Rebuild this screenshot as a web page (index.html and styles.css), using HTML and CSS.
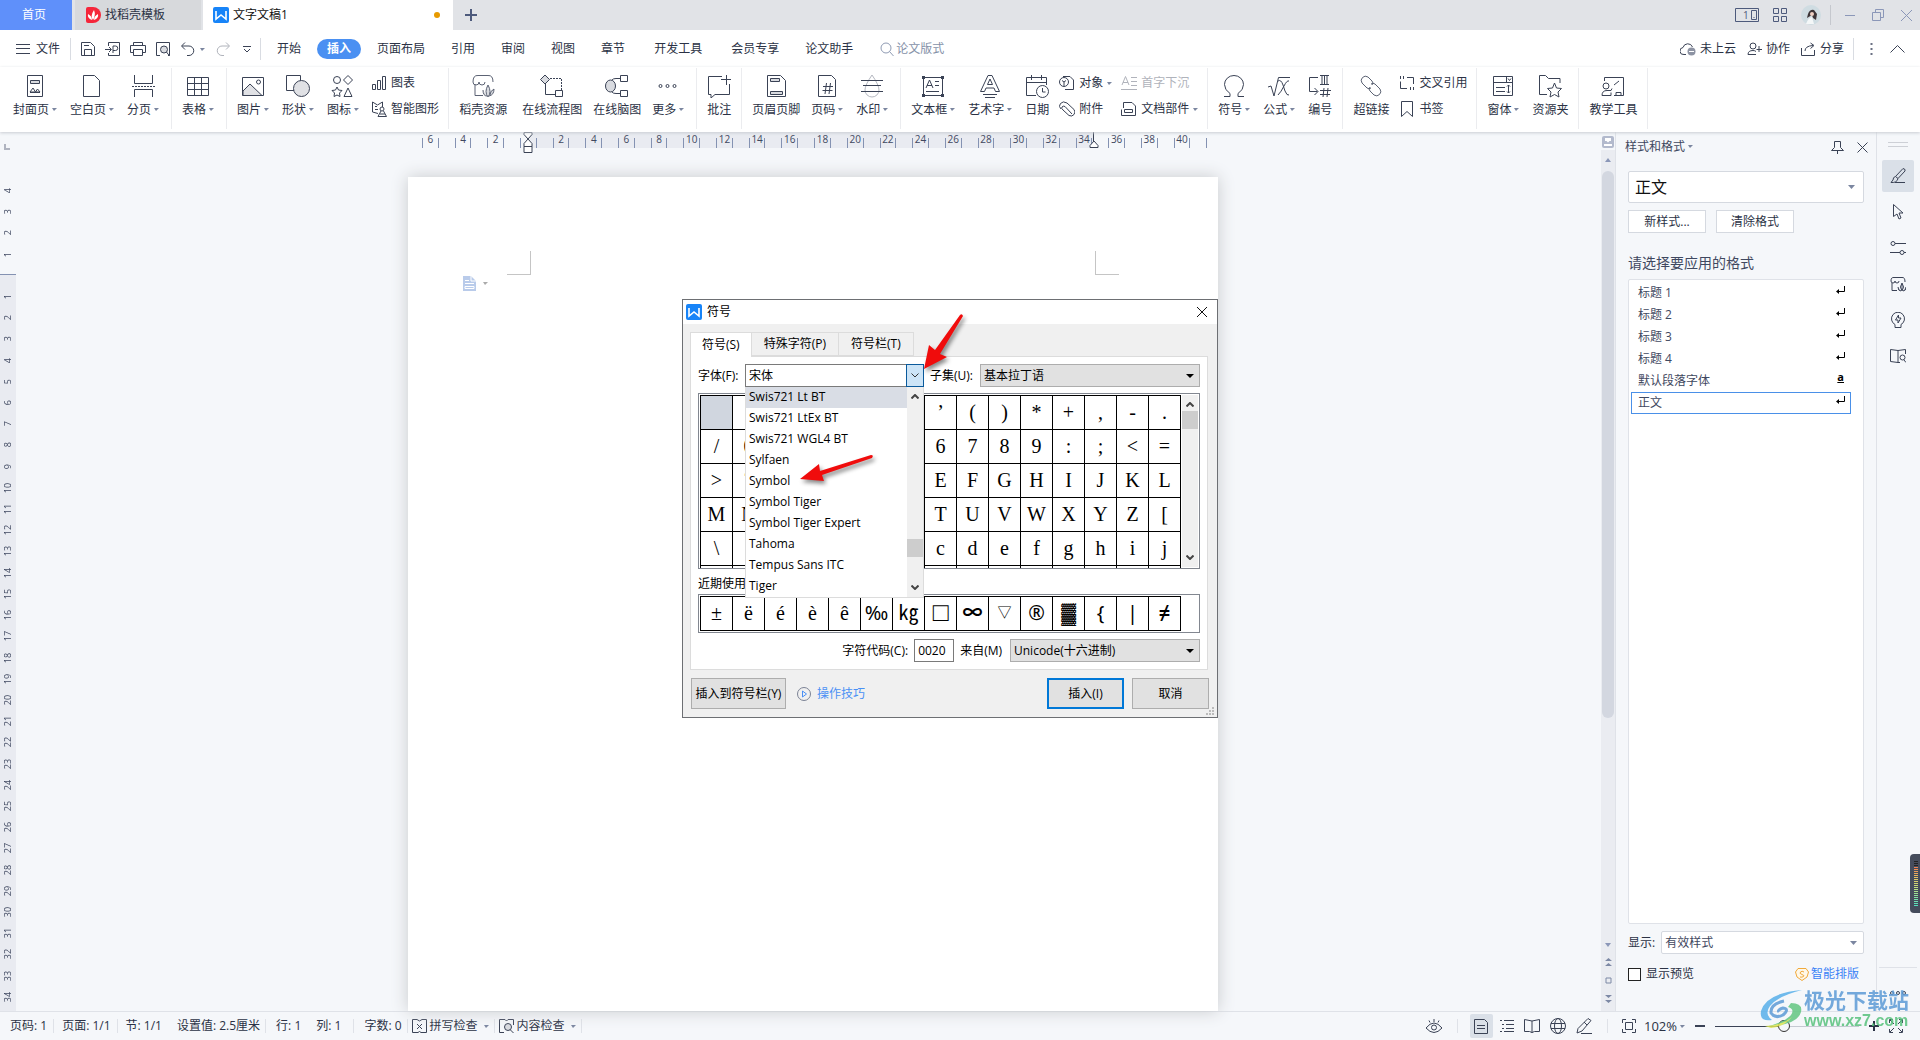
FILE: index.html
```html
<!DOCTYPE html>
<html lang="zh-CN">
<head>
<meta charset="utf-8">
<title>文字文稿1</title>
<link rel="stylesheet" href="styles.css">
</head>
<body>
<header class="tabbar">
  <button class="tab tab-home">首页</button>
  <button class="tab tab-docer"><svg class="logo" width="16" height="16" viewBox="0 0 16 16"><path d="M1 2q0-2 2-2h5a8 8 0 0 1 0 16H3q-2 0-2-2z" fill="#f5263a"/><path d="M8 13Q5 9 9 3q2 5-1 10M7 13Q2 11 3 7q4 2 4 6M9 13q0-4 4-6 1 4-4 6" fill="#fff"/></svg>找稻壳模板</button>
  <button class="tab tab-doc"><svg class="logo" width="16" height="16" viewBox="0 0 16 16"><rect width="16" height="16" rx="2" fill="#1784f8"/><path d="M3 4v8l5-4 5 4V4" fill="none" stroke="#fff" stroke-width="1.6"/></svg>文字文稿1<i class="dirty"></i></button>
  <button class="newtab" aria-label="新建"><svg width="12" height="12" viewBox="0 0 12 12"><path d="M6 0v12M0 6h12" stroke="#4d5a7c" stroke-width="2"/></svg></button>
  <div class="winbtns">
    <svg class="wi" width="24" height="14" viewBox="0 0 24 14"><path d="M.5.5h23v13H.5zM16.500 2.500h5v9h-5zM18.500 9.500h1"/><text x="8" y="11" font-size="10" stroke="none" fill="#4d5a7c">1</text></svg>
    <svg class="wi" width="14" height="14" viewBox="0 0 14 14"><path d="M.5.5h5v5h-5zM8.500.5h5v5h-5zM.5 8.500h5v5h-5zM8.500 8.500h5v5h-5z"/></svg>
    <svg width="20" height="20" viewBox="0 0 20 20"><circle cx="10" cy="10" r="10" fill="#cfdce2"/><path d="M7 9q2-5 6-4l3 4-1 6-3-2-1-3-5 3z" fill="#3c3437"/><circle cx="11" cy="9" r="2" fill="#efd0c3"/><path d="M5 19q2-6 6-7l2 7z" fill="#f4f7f8"/></svg>
    <i class="wsep"></i>
    <svg class="wi pale" width="10" height="14" viewBox="0 0 10 14"><path d="M0 7.500h10"/></svg>
    <svg class="wi pale restore" width="12" height="12" viewBox="0 0 12 12"><path d="M.5 3.500h8v8h-8zM3.500 3.500v-3h8v8h-3"/></svg>
    <svg class="wi pale" width="11" height="11" viewBox="0 0 11 11"><path d="M0 0l11 11M11 0L0 11"/></svg>
  </div>
</header>

<nav class="menubar">
  <button class="file"><svg class="ic" width="14" height="10" viewBox="0 0 14 10"><path d="M0 .5h14M0 4.500h14M0 9.500h14"/></svg>文件</button>
  <i class="msep"></i>
  <div class="quick">
    <svg class="ic" width="16" height="16" viewBox="0 0 16 16"><path d="M1.500 1.500h9l4 4v9h-13zM4.500 14.500v-6h7v6M4.500 1.500M4 4.500h5"/></svg>
    <svg class="ic" width="16" height="16" viewBox="0 0 16 16"><path d="M3.500 5V1.500h11v13h-11V12M0 8.500h6M4 6l2.500 2.500L4 11M8 12V5h2.500a2 2 0 0 1 0 4.500H8"/></svg>
    <svg class="ic" width="16" height="16" viewBox="0 0 16 16"><path d="M3.500 4.500v-3h9v3M3.500 11.500h-3v-7h15v7h-3M3.500 8.500h9v6h-9z"/></svg>
    <svg class="ic" width="16" height="16" viewBox="0 0 16 16"><path d="M5 14.500H1.500v-13h13v13H13"/><circle cx="9" cy="8.500" r="3.500" fill="#d9dbe0"/><path d="M11.500 11l3 4"/></svg>
    <svg class="ic undo" width="16" height="16" viewBox="0 0 16 16"><path d="M5 1.500L1.500 5 5 8.500M2 5h7a4.500 4.500 0 0 1 0 9.500H7"/></svg><i class="caret"></i>
    <svg class="ic faint redo" width="16" height="16" viewBox="0 0 16 16"><path d="M11 1.500L14.500 5 11 8.500M14 5H7a4.500 4.500 0 0 0 0 9.500h2"/></svg>
    <svg class="ic" width="8" height="8" viewBox="0 0 8 8"><path d="M0 1.500h8M1 4l3 3 3-3"/></svg>
  </div>
  <i class="msep"></i>
  <div class="menus">
    <button>开始</button><button class="on">插入</button><button>页面布局</button><button>引用</button><button>审阅</button><button>视图</button><button>章节</button><button class="wide">开发工具</button><button class="wide2">会员专享</button><button>论文助手</button>
  </div>
  <label class="search"><svg width="14" height="14" viewBox="0 0 14 14" fill="none" stroke="#8f9bb3"><circle cx="6" cy="6" r="5"/><path d="M9.500 9.500L13.500 14"/></svg><input type="text" placeholder="论文版式" aria-label="搜索"></label>
  <div class="share">
    <button><svg class="ic" width="16" height="14" viewBox="0 0 16 14"><path d="M6 12.500H4A3.500 3.500 0 0 1 3 5.500 5 5 0 0 1 12.500 5"/><circle cx="11.500" cy="9.500" r="4" fill="#8d93a3" stroke="none"/><path d="M9 9.500h5" stroke="#fff"/></svg>未上云</button>
    <button><svg class="ic" width="15" height="14" viewBox="0 0 15 14"><circle cx="6" cy="4" r="3"/><path d="M1 12.500q0-4 5-4 2 0 3 1M1 12.500h8M12 4v6M9.500 7.500H15"/></svg>协作</button>
    <button><svg class="ic" width="15" height="14" viewBox="0 0 15 14"><path d="M.5 6v7.500h13V8M4 9q0-5 8-5.500M9.500 1L13 3.500 9.500 6.500"/></svg>分享</button>
    <i class="msep"></i>
    <svg class="dots" width="3" height="13" viewBox="0 0 3 13"><path d="M.5 0h2v2h-2zM.5 5h2v2h-2zM.5 10h2v2h-2z" fill="#6b7183"/></svg>
    <svg class="ic" width="15" height="8" viewBox="0 0 15 8"><path d="M.5 7.500l7-7 7 7"/></svg>
  </div>
</nav>

<section class="ribbon">
  <button class="rb"><svg class="ic" viewBox="0 0 24 24"><path d="M4.500 1.500h15v21h-15z"/><path d="M7.500 6.500h9v3h-9z" fill="#d9dbe0"/><path d="M7 18l3-4 2.500 4 2-3 2.500 3zM7 18.500h10"/></svg><span>封面页<i class="caret"></i></span></button>
  <button class="rb"><svg class="ic" viewBox="0 0 24 24"><path d="M3.500 1.500h11l5 5v16h-16z"/></svg><span>空白页<i class="caret"></i></span></button>
  <button class="rb"><svg class="ic" viewBox="0 0 24 24"><path d="M3.500 1v8.500h18V1M3.500 23v-7.500h18V23"/><path d="M1 12.500h23" stroke-dasharray="2 1"/></svg><span>分页<i class="caret"></i></span></button>
  <i class="rsep"></i>
  <button class="rb"><svg class="ic" viewBox="0 0 24 24"><path d="M1.500 3.500h21v18h-21zM1.500 9.500h21M1.500 15.500h21M8.500 3.500v18M15.500 3.500v18"/></svg><span>表格<i class="caret"></i></span></button>
  <i class="rsep"></i>
  <button class="rb"><svg class="ic" viewBox="0 0 24 24"><path d="M1.500 3.500h21v18h-21z"/><path d="M2 17l7-7 12 11.500H2z" fill="#e0e1e5"/><circle cx="17.500" cy="8" r="2"/></svg><span>图片<i class="caret"></i></span></button>
  <button class="rb"><svg class="ic" viewBox="0 0 24 24"><path d="M.5 1.500h14v15H.5z"/><circle cx="15.500" cy="14.500" r="8" fill="#e0e1e5"/></svg><span>形状<i class="caret"></i></span></button>
  <button class="rb"><svg class="ic" viewBox="0 0 24 24"><circle cx="6" cy="6" r="3.500"/><path d="M17 1.500L21.500 6 17 10.500 12.500 6zM6 13l1.500 3 3.500.5-2.500 2.500.5 3.500-3-1.500L3 22.500l.5-3.500L1 16.500l3.500-.5zM17 14l4 8.500h-8z"/></svg><span>图标<i class="caret"></i></span></button>
  <div class="rcol">
    <button><svg class="ic" viewBox="0 0 16 16"><path d="M1.500 9.500h3v5h-3zM6.500 5.500h3v9h-3zM11.500 1.500h3v13h-3z"/></svg>图表</button>
    <button><svg class="ic" viewBox="0 0 16 16"><path d="M7 12.500L1.500 11V1l5 3 5-3v5M4 5.500h2M4 8.500h3"/><circle cx="11" cy="8" r="2"/><path d="M10 10l-3 5.500h8.500l-3-5.500M9 13h5"/></svg>智能图形</button>
  </div>
  <i class="rsep"></i>
  <button class="rb far"><svg class="ic soft" viewBox="0 0 24 24"><path d="M4 10v11.500h8M2 8q0-7 5-6.500h10q5-.5 5 6.500M2 8q0 3 3 3t3-3q0 3 3 3t3-3"/><path d="M17 23q-4-5 0-12 4 7 0 12M16 22q-4 0-4-6M18 22q5-1 5-7-4 2-4 6" fill="#d9dbe0"/></svg><span>稻壳资源</span></button>
  <button class="rb"><svg class="ic" viewBox="0 0 24 24"><path d="M5 1l4.500 4.500L5 10 .5 5.500z" fill="#d9dbe0"/><path d="M5.500 10v10.500H15M15.500 16.500h7v6h-7z"/><path d="M10 4.500h11.500V16" stroke-dasharray="2 1"/></svg><span>在线流程图</span></button>
  <button class="rb"><svg class="ic" viewBox="0 0 24 24"><ellipse cx="5.500" cy="12" rx="5" ry="6" fill="#d9dbe0"/><path d="M15.500 1.500h7v6h-7zM15.500 16.500h7v6h-7zM7 6q1-1.500 4-1.500h4M7 18q1 1.500 4 1.500h4"/></svg><span>在线脑图</span></button>
  <button class="rb"><svg class="ic" viewBox="0 0 24 24"><circle cx="4.500" cy="12" r="1.500"/><circle cx="11.500" cy="12" r="1.500"/><circle cx="18.500" cy="12" r="1.500"/></svg><span>更多<i class="caret"></i></span></button>
  <i class="rsep"></i>
  <button class="rb"><svg class="ic" viewBox="0 0 24 24"><path d="M15 2.500H1.500v18H4V24l4-3.500h14.500V10M14 5.500h10M19.500 1v10"/></svg><span>批注</span></button>
  <i class="rsep"></i>
  <button class="rb"><svg class="ic" viewBox="0 0 24 24"><path d="M3.500 1.500h13l5 5v16h-18z"/><path d="M6.500 4.500h9v3h-9zM6.500 17.500h12v3h-12z" fill="#d9dbe0"/></svg><span>页眉页脚</span></button>
  <button class="rb"><svg class="ic" viewBox="0 0 24 24"><path d="M3.500 1.500h13l4 4v17h-17zM11.500 9L10 20M15.500 9L14 20M8 12.500h10M7.500 16.500h10"/></svg><span>页码<i class="caret"></i></span></button>
  <button class="rb"><svg class="ic" viewBox="0 0 24 24"><path d="M12 1q-7 10-7 15a7 7 0 0 0 14 0q0-5-7-15z" stroke="#b4b7c0"/><path d="M1 6.500h22M3 11.500h18M1 17.500h22"/></svg><span>水印<i class="caret"></i></span></button>
  <i class="rsep"></i>
  <button class="rb"><svg class="ic" viewBox="0 0 24 24"><path d="M2.500 3.500h19v18h-19zM5 14l3.500-8L12 14M6 11.500h5M14 7.500h4M14 11.500h4M5 17.500h13"/><path d="M1 2h3v3H1zM20 2h3v3h-3zM1 20h3v3H1zM20 20h3v3h-3z" fill="#3a4255" stroke="none"/></svg><span>文本框<i class="caret"></i></span></button>
  <button class="rb"><svg class="ic" viewBox="0 0 24 24"><path d="M2.500 17.500L10 1.500h4l7.500 16h-4L16 14H8l-1.500 3.500zM9.500 10.500h5L12 5zM5 20.500h14M7 23.500h10"/></svg><span>艺术字<i class="caret"></i></span></button>
  <button class="rb"><svg class="ic" viewBox="0 0 24 24"><path d="M11 21.500H1.500v-18h20V11M1.500 8.500h20M6.500 1v5M16.500 1v5"/><circle cx="17.500" cy="17.500" r="6"/><path d="M17.500 14v4h3"/></svg><span>日期</span></button>
  <div class="rcol">
    <button><svg class="ic" viewBox="0 0 16 16"><path d="M4 1.500h7l3.500 3.500v9.500H6"/><circle cx="5" cy="7" r="4.500"/><path d="M3 5.500l2 1.500 2-1.500M5 7v4"/></svg>对象<i class="caret"></i></button>
    <button><svg class="ic" viewBox="0 0 16 16"><path d="M13 13L6 5.500q-2-1-3 .5t1 3l6 5.500q3 1.500 5-1t0-5L8 2Q4-.5 1.500 2.500T2 8"/></svg>附件</button>
  </div>
  <div class="rcol">
    <button class="off"><svg class="ic faint" viewBox="0 0 16 16"><path d="M1 10L4.500 1.500 8 10M2 7.500h5M10 2.500h6M10 6.500h6M10 10.500h6M0 14.500h16"/></svg>首字下沉</button>
    <button><svg class="ic" viewBox="0 0 16 16"><path d="M2.500 7V1.500H11L14.500 5v9.500h-12M.5 8.500v6h3M3.500 8.500h8v3h-8z"/></svg>文档部件<i class="caret"></i></button>
  </div>
  <i class="rsep"></i>
  <button class="rb"><svg class="ic" viewBox="0 0 24 24"><path d="M2 22.500h6v-3Q2.500 16 2.500 10.500a9.500 9 0 0 1 19 0q0 5.500-5.500 9v3h6"/></svg><span>符号<i class="caret"></i></span></button>
  <button class="rb"><svg class="ic" viewBox="0 0 24 24"><path d="M1 13l3-1 3 10L11.500 3.500H23M11 7q3-2 5 4l2 6q2 5 4 4M22 7q-2-1-5 5t-6 9"/></svg><span>公式<i class="caret"></i></span></button>
  <button class="rb"><svg class="ic" viewBox="0 0 24 24"><path d="M10 3.500H1.500v14h8M6.500 14l3.500 3.500L6.500 21M12 1.500h9M12 10.500h9M14 1.500v9M16.500 1.500v9M19 1.500v9M16 14l-1 9M20 14l-1 9M12 16.500h11M12 20.500h10"/></svg><span>编号</span></button>
  <i class="rsep"></i>
  <button class="rb"><svg class="ic soft" viewBox="0 0 24 24"><path d="M13 11q2-2 0-4L9 3Q6 1 3.500 3.500T3 9l5 5q2 1.500 4 0M11 13q-2 2 0 4l4 4q3 2 5.500-.5T21 15l-5-5q-2-1.500-4 0"/></svg><span>超链接</span></button>
  <div class="rcol">
    <button><svg class="ic" viewBox="0 0 16 16"><path d="M1.500 6.500v7H8M8 2.500h6.500V9M1.500 1v3M4.500 1v3M11.500 12v3M14.500 12v3"/></svg>交叉引用</button>
    <button><svg class="ic" viewBox="0 0 16 16"><path d="M2.500.5h11v15L8 10.500l-5.500 5z"/></svg>书签</button>
  </div>
  <i class="rsep"></i>
  <button class="rb"><svg class="ic" viewBox="0 0 24 24"><path d="M2.500 2.500h19v19h-19zM2.500 8.500h19M15.500 2.500v6M17 4.500l1.500 2 1.500-2M5 13.500h9M5 17.500h9M17.500 11v8M16 12.500l1.500-1.500 1.500 1.500M16 17.500l1.500 1.500 1.500-1.500"/></svg><span>窗体<i class="caret"></i></span></button>
  <button class="rb"><svg class="ic" viewBox="0 0 24 24"><path d="M9 20.500H1.500v-19h6l3 3h11.500V9M16.500 9l2 5 5 .5-3.500 3.500 1 5-4.500-2.500L12 23l1-5-3.500-3.500 5-.5z"/></svg><span>资源夹</span></button>
  <i class="rsep"></i>
  <button class="rb"><svg class="ic" viewBox="0 0 24 24"><path d="M3.500 7V3.500h19v18H13M13 11l5-4M15 21.500v-3h5v3"/><circle cx="5" cy="12" r="3"/><path d="M1 21.500q0-5 5-5h4l1-2M1 21.500h9v-3"/></svg><span>教学工具</span></button>
  <i class="rsep"></i>
</section>

<main class="work">
  <div class="vruler">
    <i class="tabstop"></i>
    <div class="vscale">
      <span>4</span><span>3</span><span>2</span><span>1</span><span class="zero"></span><span>1</span><span>2</span><span>3</span><span>4</span><span>5</span><span>6</span><span>7</span><span>8</span><span>9</span><span>10</span><span>11</span><span>12</span><span>13</span><span>14</span><span>15</span><span>16</span><span>17</span><span>18</span><span>19</span><span>20</span><span>21</span><span>22</span><span>23</span><span>24</span><span>25</span><span>26</span><span>27</span><span>28</span><span>29</span><span>30</span><span>31</span><span>32</span><span>33</span><span>34</span>
    </div>
  </div>
  <div class="canvas">
    <div class="hruler">
      <div class="hscale">
        <span>6</span><span>4</span><span>2</span><span class="origin"><svg width="10" height="22" viewBox="0 0 10 22"><path d="M1 .5h8v2L5 7 1 2.500zM5 7l4 4.500v3H1v-3zM1 14.500h8v6H1z" fill="#fff" stroke="#3a4255"/></svg></span><span>2</span><span>4</span><span>6</span><span>8</span><span>10</span><span>12</span><span>14</span><span>16</span><span>18</span><span>20</span><span>22</span><span>24</span><span>26</span><span>28</span><span>30</span><span>32</span><span class="edge">34<svg width="10" height="16" viewBox="0 0 10 16"><path d="M4.500 0v9M1 15.500v-2L5 9l4 4.500v2z" fill="#fff" stroke="#3a4255"/></svg></span><span>36</span><span>38</span><span>40</span><span class="last"></span>
      </div>
    </div>
    <div class="page">
      <i class="crop crop-l"></i><i class="crop crop-r"></i>
      <div class="smart"><svg width="13" height="15" viewBox="0 0 13 15"><path d="M0 0h8l5 5v10H0z" fill="#b9cbea"/><path d="M8 0v5h5M2 4.500h4M2 7.500h9M2 10.500h9v2H2z" fill="none" stroke="#fff"/></svg><i class="caret"></i></div>
    </div>
  </div>
  <div class="vscroll">
    <svg width="12" height="12" viewBox="0 0 12 12"><rect width="12" height="12" rx="2" fill="#b3bacd"/><path d="M3 2h6v3H7.500L6 6.500 4.500 5H3zM2 8h8v2H2z" fill="#fff"/></svg>
    <div class="track">
      <i class="up"></i><i class="thumb"></i>
      <i class="down"></i>
      <svg width="7" height="8" viewBox="0 0 7 8"><path d="M3.500 0L7 3H0zM3.500 5L7 8H0z" fill="#7d89a5"/></svg>
      <svg width="7" height="7" viewBox="0 0 7 7"><path d="M1 1h5v5H1z" fill="none" stroke="#7d89a5"/></svg>
      <svg width="7" height="8" viewBox="0 0 7 8"><path d="M0 0h7L3.500 3zM0 5h7L3.500 8z" fill="#7d89a5"/></svg>
    </div>
  </div>
  <aside class="panel">
    <div class="phead"><span>样式和格式<i class="caret"></i></span><svg class="ic" width="13" height="13" viewBox="0 0 13 13"><path d="M3.500.5h6v6l3 3H.5l3-3zM6.500 10v3"/></svg><svg class="ic" width="11" height="11" viewBox="0 0 11 11"><path d="M.5.5l10 10M10.500.5l-10 10"/></svg></div>
    <select class="cur" aria-label="当前样式"><option>正文</option></select>
    <div class="pbtns"><button>新样式...</button><button>清除格式</button></div>
    <h2>请选择要应用的格式</h2>
    <ul class="styles">
      <li>标题 1<svg class="ret" viewBox="0 0 10 8"><path d="M9.500 0v5.500H2"/><path d="M4 3v5L1 5.500z" fill="#000" stroke="none"/></svg></li>
      <li>标题 2<svg class="ret" viewBox="0 0 10 8"><path d="M9.500 0v5.500H2"/><path d="M4 3v5L1 5.500z" fill="#000" stroke="none"/></svg></li>
      <li>标题 3<svg class="ret" viewBox="0 0 10 8"><path d="M9.500 0v5.500H2"/><path d="M4 3v5L1 5.500z" fill="#000" stroke="none"/></svg></li>
      <li>标题 4<svg class="ret" viewBox="0 0 10 8"><path d="M9.500 0v5.500H2"/><path d="M4 3v5L1 5.500z" fill="#000" stroke="none"/></svg></li>
      <li>默认段落字体<b>a</b></li>
      <li class="sel">正文<svg class="ret" viewBox="0 0 10 8"><path d="M9.500 0v5.500H2"/><path d="M4 3v5L1 5.500z" fill="#000" stroke="none"/></svg></li>
    </ul>
    <div class="show"><label for="show">显示:</label><select id="show"><option>有效样式</option></select></div>
    <div class="prev"><label><input type="checkbox">显示预览</label><a href="#"><svg width="14" height="13" viewBox="0 0 14 13"><path d="M3 .5h8l2.500 3.500L12 9l-5 3.500L2 9 .5 4z" fill="#fff8e8" stroke="#f0a93b"/><path d="M9 4Q7 2.500 5.500 4T7 6.500t1.500 2T5 9" fill="none" stroke="#f0a93b"/></svg>智能排版</a></div>
  </aside>
  <aside class="strip">
    <i class="grip"></i>
    <button class="on" aria-label="样式"><svg class="ic" viewBox="0 0 16 16"><path d="M15 1.500L13 .5 5.500 8.500l2.500 2 7-7.500zM5.500 8.500Q3 9 3 12l-2 2.500q6 .5 7-4M5 14.500h10"/></svg></button>
    <button aria-label="选择"><svg class="ic" viewBox="0 0 16 16"><path d="M3.500.5v12L7 10l2 5 2-1-2-5h4z"/></svg></button>
    <button aria-label="属性"><svg class="ic" viewBox="0 0 16 16"><circle cx="3" cy="3.500" r="2"/><circle cx="12" cy="12.500" r="2"/><path d="M5 3.500h11M0 12.500h10M14 12.500h2"/></svg></button>
    <button aria-label="稻壳"><svg class="ic" viewBox="0 0 16 16"><path d="M2 7v7.500h5M1 5q0-4 3-3.500h8q3-.5 3 4.500M1 5q0 2 2 2t2-2q0 2 2 2t2-2"/><path d="M12 15q-3-4 0-8 3 4 0 8M11 15q-3 0-3-4M13 15q3 0 3-4" fill="#b0b4c0"/></svg></button>
    <button aria-label="灵感"><svg class="ic" viewBox="0 0 16 16"><path d="M5 12.500a6.500 6.500 0 1 1 6 0v3H5zM8.500 3L5.500 8H8v3l3-5H8.500z"/></svg></button>
    <button aria-label="查阅"><svg class="ic" viewBox="0 0 16 16"><path d="M8 2.500L.5 1.500v12L8 14.500zM8 2.500l7.500-1V6M8 14.500h2"/><circle cx="12.500" cy="9.500" r="2.500"/><path d="M14 12l2 2.500"/></svg></button>
    <div class="more"><svg class="ic" width="16" height="4" viewBox="0 0 16 4"><circle cx="2" cy="2" r="1.500"/><circle cx="8" cy="2" r="1.500"/><circle cx="14" cy="2" r="1.500"/></svg></div>
  </aside>
</main>

<footer class="status">
  <span>页码: 1</span><i></i><span>页面: 1/1</span><i></i><span>节: 1/1</span><span>设置值: 2.5厘米</span><i class="loose"></i><span>行: 1</span><span>列: 1</span><i class="gap"></i><span>字数: 0</span><i class="tight"></i>
  <button><svg class="ic" width="15" height="14" viewBox="0 0 15 14"><path d="M5 .5H.5v13H6l1.500-1 1.500 1h5.500V.5H10L7.500 2zM5 5l5 5M10 5l-5 5"/></svg>拼写检查<b class="caret"></b></button><i class="tight"></i>
  <button><svg class="ic" width="15" height="14" viewBox="0 0 15 14"><path d="M5 13.500H.5V.5H6L7.500 2 9 .5h5.500V6"/><circle cx="9" cy="8" r="3.500" fill="#d9dbe0"/><path d="M11 10.500l3.500 3.500"/></svg>内容检查<b class="caret"></b></button><i class="tight"></i>
  <div class="views">
    <svg class="ic" width="16" height="16" viewBox="0 0 16 16"><path d="M0 10q8-10 16 0-8 9-16 0zM8 1v3M3 2.500l1 2M13 2.500l-1 2"/><circle cx="8" cy="9.500" r="2.500"/></svg>
    <i></i>
    <button class="on" aria-label="页面视图"><svg class="ic" width="14" height="15" viewBox="0 0 14 15"><path d="M.5.5h10l3 3v11H.5zM3 6.500h8M3 9.500h8"/></svg></button>
    <svg class="ic" width="14" height="14" viewBox="0 0 14 14"><path d="M0 1.500h2M4 1.500h10M2 5.500h2M6 5.500h8M2 9.500h2M6 9.500h8M0 12.500h2M4 12.500h10"/></svg>
    <svg class="ic" width="16" height="14" viewBox="0 0 16 14"><path d="M8 2L.5.5v12h5L8 13.500l2.500-1h5V.5zM8 2v12"/></svg>
    <svg class="ic" width="16" height="16" viewBox="0 0 16 16"><circle cx="8" cy="8" r="7.500"/><ellipse cx="8" cy="8" rx="3.500" ry="7.500"/><path d="M1 5.500h14M1 10.500h14"/></svg>
    <svg class="ic" width="16" height="16" viewBox="0 0 16 16"><path d="M12 .5l3 2L6 13l-5 2 1-4.500zM8 4l3 3M5 15.500h11"/></svg>
    <i></i>
    <svg class="ic" width="14" height="14" viewBox="0 0 14 14"><path d="M.5 4V.5H4M10 .5h3.500V4M13.500 10v3.500H10M4 13.500H.5V10M3.500 3.500h7v7h-7z"/></svg>
    <span class="zoom">102%<b class="caret"></b></span>
    <svg width="10" height="2" viewBox="0 0 10 2"><path d="M0 0h10v2H0z" fill="#3a4255"/></svg>
    <input type="range" min="0" max="200" value="96" aria-label="显示比例">
    <svg width="10" height="10" viewBox="0 0 10 10"><path d="M5 0v10M0 5h10" stroke="#2b3245" stroke-width="2"/></svg>
    <svg class="ic" width="14" height="14" viewBox="0 0 14 14"><path d="M.5 4V.5H4M10 .5h3.500V4M13.500 10v3.500H10M4 13.500H.5V10M1 1l4 4M13 1L9 5M13 13L9 9M1 13l4-4"/></svg>
  </div>
</footer>

<section class="dialog" role="dialog" aria-label="符号">
  <div class="dtitle"><svg width="16" height="16" viewBox="0 0 16 16"><rect width="16" height="16" rx="2" fill="#1784f8"/><path d="M3 4v8l5-4 5 4V4" fill="none" stroke="#fff" stroke-width="1.600"/></svg><span>符号</span><svg width="10" height="10" viewBox="0 0 10 10"><path d="M0 0l10 10M10 0L0 10" stroke="#111"/></svg></div>
  <div class="dtabs"><button class="on">符号(S)</button><button>特殊字符(P)</button><button>符号栏(T)</button></div>
  <div class="pane">
    <div class="frow">
      <label for="font">字体(F):</label>
      <div class="combo"><input id="font" type="text" value="宋体"><button aria-label="展开"><svg width="8" height="5" viewBox="0 0 8 5"><path d="M.5.5L4 4 7.500.5" fill="none" stroke="#333"/></svg></button>
        <div class="drop">
          <ul><li class="hot">Swis721 Lt BT</li><li>Swis721 LtEx BT</li><li>Swis721 WGL4 BT</li><li>Sylfaen</li><li>Symbol</li><li>Symbol Tiger</li><li>Symbol Tiger Expert</li><li>Tahoma</li><li>Tempus Sans ITC</li><li>Tiger</li></ul>
          <div class="sb sb-list"><svg viewBox="0 0 8 5"><path d="M.5 4.500L4 1l3.500 3.500"/></svg><i></i><svg viewBox="0 0 8 5"><path d="M.5.5L4 4 7.500.5"/></svg></div>
        </div>
      </div>
      <label for="subset">子集(U):</label>
      <select id="subset" class="gsel"><option>基本拉丁语</option></select>
    </div>
    <div class="gbox gmain">
      <table class="glyphs">
        <tr><td class="pick"> <td><td><td><td><td><td><td>’<td>(<td>)<td>*<td>+<td>,<td>-<td>.
        <tr><td>/<td>0<td><td><td><td><td><td>6<td>7<td>8<td>9<td>:<td>;<td>&lt;<td>=
        <tr><td>&gt;<td>?<td><td><td><td><td><td>E<td>F<td>G<td>H<td>I<td>J<td>K<td>L
        <tr><td>M<td>N<td><td><td><td><td><td>T<td>U<td>V<td>W<td>X<td>Y<td>Z<td>[
        <tr><td>\<td>]<td><td><td><td><td><td>c<td>d<td>e<td>f<td>g<td>h<td>i<td>j
        <tr><td><td><td><td><td><td><td><td><td><td><td><td><td><td><td>
      </table>
      <div class="sb sb-grid"><svg viewBox="0 0 8 5"><path d="M.5 4.500L4 1l3.500 3.500"/></svg><i></i><svg viewBox="0 0 8 5"><path d="M.5.5L4 4 7.500.5"/></svg></div>
    </div>
    <div class="recent">近期使用</div>
    <div class="gbox">
      <table class="glyphs"><tr><td>±<td>ë<td>é<td>è<td>ê<td class="ui">‰<td class="ui">㎏<td class="big">□<td class="ui bold">∞<td class="small">▽<td class="ui">®<td>▓<td class="ui">{<td class="ui">|<td class="ui bold">≠</table>
    </div>
    <div class="code"><label for="code">字符代码(C):</label><input id="code" type="text" value="0020"><label for="from">来自(M)</label><select id="from" class="gsel"><option>Unicode(十六进制)</option></select></div>
  </div>
  <div class="dfoot"><button class="bar">插入到符号栏(Y)</button><a href="#"><svg width="14" height="14" viewBox="0 0 14 14" fill="none"><circle cx="7" cy="7" r="6.500" stroke="#7b8294"/><path d="M5.500 4l4 3-4 3z" stroke="#4a90f5"/></svg>操作技巧</a><button class="ok">插入(I)</button><button class="no">取消</button></div>
  <svg class="size" width="8" height="8" viewBox="0 0 8 8"><path d="M6 0h2v2H6zM3 3h2v2H3zM6 3h2v2H6zM0 6h2v2H0zM3 6h2v2H3zM6 6h2v2H6z" fill="#bbb"/></svg>
  <svg class="arrows" width="180" height="180" viewBox="0 0 180 180"><path d="M132 63l5-24 6 5L168 9q2-2 3 1l-23 38 7 3z"/><path d="M8 173l19-15 1 7 51-16q3 0 1 3l-50 17 2 6z"/></svg>
</section>

<div class="watermark"><svg width="44" height="40" viewBox="0 0 44 40"><path d="M42 1Q6 4 1 22q-2 11 11 9-8-6-2-14Q18 7 42 1z" fill="#58b0ea"/><path d="M31 14q12 0 10 9-3 13-36 15 20-5 26-12 4-6-3-8z" fill="#63c682"/><path d="M24 12q-14 3-13 12 4 6 12 2 7-6 0-7-6 2-4 4" fill="none" stroke="#5d9bd6" stroke-width="3"/><path d="M5 37q18-1 27-9-8 10-21 11z" fill="#dce352"/></svg><div><b>极光下载站</b><span>www.xz7.com</span></div></div>
<div class="meter"><i></i></div>
</body>
</html>
```
FILE: styles.css
```css
*{box-sizing:border-box}
body{margin:0;height:100vh;display:flex;flex-direction:column;overflow:hidden;background:#f5f7fa;font:12px/16px "Open Sans","Noto Sans CJK SC",sans-serif;color:#2b3245}
button{font:inherit;color:inherit;background:none;border:0;padding:0;white-space:nowrap}
input,select{font:inherit;color:inherit}
a{text-decoration:none;color:#3b82f6}
ul{list-style:none;margin:0;padding:0}
svg{flex:none;display:block}
.ic{fill:none;stroke:#3a4255}
.soft{stroke:#5c6374}
.faint{stroke:#b0b3bb}
.caret{display:inline-block;border:solid transparent;border-width:3px 3px 0 2px;border-top-color:#7b86a0;width:0;margin-left:3px;vertical-align:3px}

.tabbar{display:flex;height:30px;flex:none;background:#e1e3e7}
.tab{display:flex;align-items:center;height:30px}
.tab-home{width:72px;justify-content:center;padding-right:4px;background:#5f90fa;color:#fff}
.tab-docer{width:126px;margin-left:3px;padding-left:10px;gap:4px;background:#d7d9dc}
.tab-doc{width:250px;margin-left:2px;padding:0 13px 0 10px;gap:4px;background:#fff;color:#111}
.dirty{width:6px;height:6px;border-radius:3px;background:#e79a00;margin-left:auto}
.newtab{margin-left:12px}
.winbtns{margin-left:auto;display:flex;align-items:center;gap:14px;padding-right:8px}
.wi{fill:none;stroke:#4d5a7c}
.pale{stroke:#8b97b8}
.restore{margin:0 3px}
.wsep{width:1px;height:20px;background:#c5c8ce;margin-left:-5px}

.menubar{display:flex;align-items:center;height:37px;flex:none;background:#fff;padding:1px 15px 0 16px}
.file{display:flex;align-items:center;gap:6px}
.msep{width:1px;height:22px;background:#d9dce2;margin-left:10px}
.quick{display:flex;align-items:center;gap:9px;margin-left:9px}
.quick .caret{margin:0 1px 0 -5px}
.redo{margin-right:3px}
.quick + .msep{margin-left:9px}
.menus{display:flex;gap:6px;margin-left:6px}
.menus button{padding:0 10px;height:20px;border-radius:10px}
.menus .on{background:#4a90f2;color:#fff;font-weight:bold}
.menus .wide{padding:0 10px 0 13px}
.menus .wide2{padding:0 10px 0 13px}
.search{display:flex;align-items:center;gap:2px;margin-left:17px;color:#8591a8}
.search input{border:0;background:none;width:80px;padding:0}
.search input::placeholder{color:#8591a8}
.share{margin-left:auto;display:flex;align-items:center;gap:11px}
.share button{display:flex;align-items:center;gap:4px}
.share .msep{margin-left:-2px}
.dots{margin:0 6px 0 5px}

.ribbon{display:flex;height:65px;flex:none;background:#fff;padding-left:8px;position:relative;z-index:1;box-shadow:0 1px 3px #c9ccd2}
.rb{display:flex;flex-direction:column;align-items:center;gap:4px;padding:7px 6px 0 5px;flex:none}
.rb:has(.caret){padding-right:8px}
.rb svg{width:24px;height:24px}
.rb span{display:block;height:16px}
.far{margin-right:4px}
.rsep{width:1px;height:61px;background:#ebecef;margin:1px 5px 0 4px;flex:none}
.rcol{display:flex;flex-direction:column;padding:3px 5px 0 4px}
.rcol button{display:flex;align-items:center;gap:4px;height:26px}
.rcol .caret{margin-left:0}
.rcol svg{width:16px;height:16px}
.off{color:#b0b3bb}

.work{flex:1;display:flex;min-height:0}
.vruler{width:16px;flex:none;overflow:hidden;background:linear-gradient(#f5f7fa 142px,#8492b2 142px,#8492b2 143px,#e9ebf1 143px)}
.tabstop{display:block;width:6px;height:6px;margin:12px 0 30px 4px;border:solid #b0b4c0;border-width:0 0 2px 2px}
.vscale{display:grid;grid-auto-rows:1fr;height:827px;font-size:9px;line-height:12px;color:#3f4860}
.vscale span{writing-mode:vertical-rl;transform:rotate(180deg);text-align:center;padding-right:2px}
.canvas{flex:1;display:flex;flex-direction:column;align-items:center;min-width:0;padding-left:9px}
.hruler{width:810px;height:16px;flex:none;background:linear-gradient(#e9ebf1,#e9ebf1) 121px 0/565px 16px no-repeat;padding-left:6px}
.hscale{display:grid;grid-auto-flow:column;grid-auto-columns:1fr;width:817px;font-size:10px;line-height:10px;color:#3f4860;text-align:center}
.hscale span{margin:2px 8px 0;height:14px;position:relative;display:flex;justify-content:center;background:linear-gradient(#8492b2,#8492b2) 0 4px/1px 10px no-repeat,linear-gradient(#8492b2,#8492b2) 100% 4px/1px 10px no-repeat}
.hscale .last{background:linear-gradient(#8492b2,#8492b2) 0 4px/1px 10px no-repeat}
.origin svg{position:absolute;top:-2px}
.edge svg{position:absolute;top:-2px;right:-7px}
.page{position:relative;width:810px;flex:1;margin-top:29px;background:#fff;box-shadow:0 0 16px #c8cacd}
.crop{position:absolute;top:74px;width:24px;height:24px;border:solid #c5c5c5;border-width:0 1px 1px 0}
.crop-l{left:99px}
.crop-r{right:99px;border-width:0 0 1px 1px}
.smart{position:absolute;left:55px;top:99px;display:flex;align-items:center;gap:4px}
.smart .caret{border-top-color:#aaa}
.vscroll{width:14px;flex:none;padding-top:4px;display:flex;flex-direction:column;align-items:center;gap:2px}
.track{flex:1;width:14px;background:#eaecf1;display:flex;flex-direction:column;align-items:center;gap:11px;padding:8px 0 8px}
.up,.down{border:solid transparent;border-width:0 3px 4px;border-bottom-color:#8b97b8}
.down{border-width:4px 3px 0;border-top-color:#8b97b8;margin-top:auto}
.thumb{width:12px;height:547px;margin-top:-2px;border-radius:6px;background:#d3d7e0}
.panel{width:262px;flex:none;border:solid #dfe2e8;border-width:0 1px;padding:7px 12px 29px;display:flex;flex-direction:column}
.phead{display:flex;align-items:center;margin-left:-3px;color:#3f4860}
.phead span{flex:1}
.phead svg:last-child{margin:0 -4px 0 13px}
.panel select{appearance:none;border:1px solid #d5d9e0;border-radius:2px;background:#fff url("data:image/svg+xml,%3Csvg xmlns='http://www.w3.org/2000/svg' width='7' height='4'%3E%3Cpath d='M0 0h7L3.500 4z' fill='%237b86a0'/%3E%3C/svg%3E") no-repeat right 8px center;color:#3f4860}
.panel .cur{height:32px;margin-top:16px;padding:0 6px;font-size:16px;color:#111}
.pbtns{display:flex;gap:10px;margin-top:7px}
.pbtns button{width:78px;height:23px;border:1px solid #d5d9e0;background:#fff}
.panel h2{font:14px/20px "Open Sans","Noto Sans CJK SC",sans-serif;color:#3f4860;margin:20px 0 6px}
.styles{flex:1;background:#fff;border:1px solid #dfe2e8;border-radius:2px;padding:2px 12px 0 2px;color:#3f4860}
.styles li{display:flex;justify-content:space-between;height:22px;line-height:20px;padding:0 5px 0 6px;border:1px solid transparent}
.styles .sel{border-color:#4a90e8}
.styles b{font-size:11px;line-height:12px;text-decoration:underline;color:#000;margin-right:1px}
.ret{width:10px;height:8px;margin-top:3px;fill:none;stroke:#000}
.show{display:flex;align-items:center;gap:6px;margin-top:7px}
.show select{flex:1;height:23px;padding:0 3px;background-position:right 6px center}
.prev{display:flex;align-items:center;justify-content:space-between;margin-top:12px;padding-right:5px}
.prev label,.prev a{display:flex;align-items:center;gap:5px}
.prev a{gap:2px}
.prev input{appearance:none;width:13px;height:13px;margin:0;border:1px solid #222;background:#fff}
.strip{width:43px;flex:none;display:flex;flex-direction:column;align-items:center;gap:4px;padding:10px 1px 0 0}
.grip{width:20px;height:5px;border:solid #cdd0d6;border-width:1px 0;margin-bottom:9px}
.strip button{width:32px;height:32px;border-radius:2px;padding:8px}
.strip button svg{width:16px;height:16px}
.strip .on{background:#dae0e8}
.more{margin-top:auto;border-top:1px solid #dfe2e8;width:38px;padding:23px 11px 16px}

.status{display:flex;align-items:center;height:29px;flex:none;border-top:1px solid #dfe2e8;padding:0 17px 0 10px}
.status i{width:1px;height:14px;background:#dfe2e8;margin:0 8px 0 6px}
.status .tight{margin:0 4px 0 5px}
.status .loose{margin:0 10px 0 5px}
.status .gap{margin:0 10px 0 12px}
.status span{white-space:nowrap}
.status > span + span{margin-left:15px}
.status button{display:flex;align-items:center;gap:3px}
.views{margin-left:auto;display:flex;align-items:center;gap:10px}
.status .views i{margin:0 4px 0 5px}
.views .on{width:23px;height:24px;justify-content:center;background:#dae0e8;border-radius:2px;margin:0 -3px 0 -2px}
.zoom{font-size:13px;margin:0 0 0 -2px}
.views input{appearance:none;width:144px;height:13px;margin:0;background:linear-gradient(90deg,#3a4255 48%,#c5c9d2 48%) 0 6px/100% 1px no-repeat}
.views input::-webkit-slider-thumb{appearance:none;width:12px;height:12px;border-radius:6px;border:1px solid #333;background:#f5f7fa}

.dialog{position:absolute;left:682px;top:299px;width:536px;height:419px;background:#f0f0f0;border:1px solid #6d6f73;color:#000;z-index:2}
.dtitle{display:flex;align-items:center;gap:5px;height:24px;padding:0 10px 0 3px;background:#fff}
.dtitle span{flex:1}
.dtabs{display:flex;align-items:flex-end;height:32px;padding:7px 0 0 7px}
.dtabs button{height:24px;padding:0 12px;border:1px solid #dcdcdc;border-left:0}
.dtabs .on{height:25px;padding:0 11px;background:#fff;border:1px solid #dcdcdc;border-bottom:0;position:relative;top:1px}
.pane{margin:0 9px 0 7px;border:1px solid #dcdcdc;background:#fff;padding:7px 7px 8px;height:314px}
.frow,.code{display:flex;align-items:center}
.frow label:first-child{width:47px}
.combo{position:relative;display:flex;width:179px;height:23px;margin-right:6px}
.combo input{flex:1;min-width:0;border:1px solid #7a7a7a;border-right:0;padding:0 3px}
.combo button{width:18px;border:1px solid #0a5a9c;background:#cce4f7;display:flex;align-items:center;justify-content:center}
.gsel{appearance:none;height:23px;border:1px solid #adadad;border-radius:0;background:#e1e1e1 url("data:image/svg+xml,%3Csvg xmlns='http://www.w3.org/2000/svg' width='8' height='4'%3E%3Cpath d='M0 0h8L4 4z'/%3E%3C/svg%3E") no-repeat right 5px center;padding:0 3px}
.frow .gsel{flex:1;margin-left:7px}
.drop{position:absolute;top:23px;left:0;width:179px;height:211px;display:flex;background:#fff;border:1px solid #dcdcdc;border-top:0;z-index:3}
.drop ul{flex:1}
.drop li{height:21px;line-height:20px;padding-left:3px}
.hot{background:#d9dde5}
.sb{width:16px;background:#f0f0f0;display:flex;flex-direction:column;align-items:center;padding:7px 0}
.sb svg{width:8px;height:5px;fill:none;stroke:#444;stroke-width:2}
.sb i{width:100%;height:18px;background:#cdcdcd}
.sb svg:last-child{margin-top:auto}
.sb-list i{margin-top:140px}
.sb-grid i{margin-top:4px}
.gbox{border:1px solid #828790;padding:1px;display:flex;justify-content:space-between;overflow:hidden}
.gmain{height:176px;margin-top:6px}
.glyphs{border-collapse:collapse;table-layout:fixed;width:481px;font:20px/24px "Liberation Serif","Noto Sans CJK SC",serif;text-align:center}
.glyphs tr{height:34px}
.glyphs td{width:32px;height:34px;border:1px solid #000;padding:0 0 2px}
.glyphs .ui{font-family:"Noto Sans","Noto Sans CJK SC",sans-serif}
.glyphs .bold{font-weight:bold}
.glyphs .big{font-size:26px}
.glyphs .small{font-size:14px}
.glyphs .pick{background:#d0d6df}
.recent{margin:7px 0 2px}
.code{justify-content:flex-end;margin-top:6px}
.code input{width:40px;height:23px;border:1px solid #7a7a7a;padding:0 3px;margin:0 6px}
.code .gsel{width:190px;margin-left:8px}
.dfoot{display:flex;align-items:center;padding:8px 8px 0}
.dfoot button{height:31px;width:77px;border:1px solid #adadad;background:#e1e1e1}
.dfoot .bar{width:95px}
.dfoot .ok{margin:0 8px 0 auto;border:2px solid #0078d7}
.dfoot a{display:flex;align-items:center;gap:6px;margin-left:11px;color:#4a90f5}
.size{position:absolute;right:3px;bottom:2px}
.arrows{position:absolute;left:109px;top:6px;fill:#f00c0c;filter:drop-shadow(2px 3px 2px #0007);z-index:4;pointer-events:none}
.watermark{position:absolute;right:11px;bottom:9px;display:flex;opacity:.85;z-index:3}
.watermark div{display:flex;flex-direction:column}
.watermark b{font-size:21px;line-height:22px;color:#5d9bd6}
.watermark span{font:bold 16px/20px "Liberation Sans",sans-serif;color:#58c27d}
.meter{position:absolute;right:0;top:854px;width:10px;height:59px;padding:7px 2px 7px 4px;border-radius:4px 0 0 4px;background:#454c5c;z-index:3}
.meter i{display:block;height:45px;background:repeating-linear-gradient(#0000 0 1px,#454c5c 1px 2px),linear-gradient(#222 12%,#f08050 14%,#e8c060 35%,#c0e080 60%,#50e0c0)}
```
